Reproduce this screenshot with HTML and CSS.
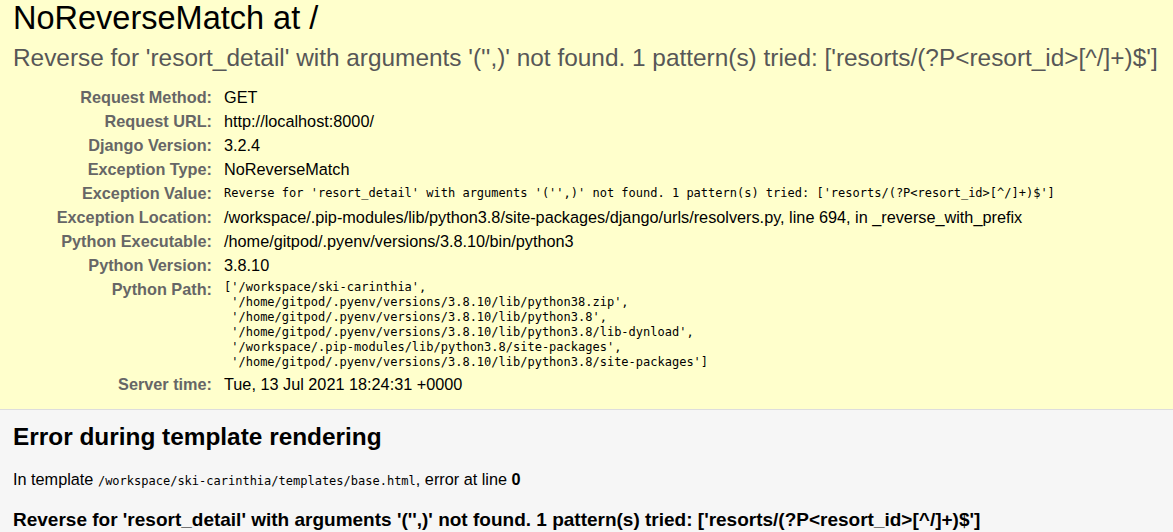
FILE: index.html
```html
<!DOCTYPE html>
<html lang="en">
<head>
<meta charset="utf-8">
<title>NoReverseMatch at /</title>
<link rel="stylesheet" href="styles.css">
</head>
<body>
<div class="summary">
  <h1 class="title">NoReverseMatch at /</h1>
  <pre class="exception-value">Reverse for 'resort_detail' with arguments '('',)' not found. 1 pattern(s) tried: ['resorts/(?P&lt;resort_id&gt;[^/]+)$']</pre>
  <table class="meta">
    <tbody>
      <tr><th>Request Method:</th><td>GET</td></tr>
      <tr><th>Request URL:</th><td>http://localhost:8000/</td></tr>
      <tr><th>Django Version:</th><td>3.2.4</td></tr>
      <tr><th>Exception Type:</th><td>NoReverseMatch</td></tr>
      <tr><th>Exception Value:</th><td><pre class="mono mono-value">Reverse for 'resort_detail' with arguments '('',)' not found. 1 pattern(s) tried: ['resorts/(?P&lt;resort_id&gt;[^/]+)$']</pre></td></tr>
      <tr><th>Exception Location:</th><td>/workspace/.pip-modules/lib/python3.8/site-packages/django/urls/resolvers.py, line 694, in _reverse_with_prefix</td></tr>
      <tr><th>Python Executable:</th><td>/home/gitpod/.pyenv/versions/3.8.10/bin/python3</td></tr>
      <tr><th>Python Version:</th><td>3.8.10</td></tr>
      <tr><th>Python Path:</th><td><pre class="mono">['/workspace/ski-carinthia',
 '/home/gitpod/.pyenv/versions/3.8.10/lib/python38.zip',
 '/home/gitpod/.pyenv/versions/3.8.10/lib/python3.8',
 '/home/gitpod/.pyenv/versions/3.8.10/lib/python3.8/lib-dynload',
 '/workspace/.pip-modules/lib/python3.8/site-packages',
 '/home/gitpod/.pyenv/versions/3.8.10/lib/python3.8/site-packages']</pre></td></tr>
      <tr><th>Server time:</th><td>Tue, 13 Jul 2021 18:24:31 +0000</td></tr>
    </tbody>
  </table>
</div>
<div class="template">
  <h2 class="section-title">Error during template rendering</h2>
  <p class="template-info">In template <code class="code">/workspace/ski-carinthia/templates/base.html</code>, error at line <strong>0</strong></p>
  <h3 class="template-message">Reverse for 'resort_detail' with arguments '('',)' not found. 1 pattern(s) tried: ['resorts/(?P&lt;resort_id&gt;[^/]+)$']</h3>
</div>
</body>
</html>
```
FILE: styles.css
```css
html, body {
  margin: 0;
  padding: 0;
}
body {
  font-family: "Liberation Sans", Arial, sans-serif;
  font-size: 16.25px;
  color: #000;
  background: #fff;
  overflow: hidden;
}
.summary {
  background: #ffc;
  padding: 0 13px 12px;
  border-bottom: 1px solid #ddd;
}
.title {
  margin: 0;
  font-size: 32.5px;
  font-weight: normal;
  line-height: 37px;
}
.exception-value {
  margin: 7px 0 13.5px;
  font-family: "Liberation Sans", Arial, sans-serif;
  font-size: 24.4px;
  line-height: 28px;
  color: #575757;
  white-space: pre-wrap;
}
.meta {
  border-collapse: collapse;
  border: none;
  width: 100%;
}
.meta th {
  width: 195px;
  text-align: right;
  vertical-align: top;
  color: #666;
  font-weight: bold;
  padding: 2.5px 8px 2.5px 4px;
  line-height: 19px;
  white-space: nowrap;
}
.meta td {
  vertical-align: top;
  padding: 2.5px 4px;
  line-height: 19px;
}
.mono {
  margin: 0;
  font-family: "DejaVu Sans Mono", monospace;
  font-size: 12px;
  line-height: 15px;
  white-space: pre-wrap;
}
.mono-value {
  padding-top: 2px;
}
.template {
  background: #f6f6f6;
  padding: 13px 13px 20px;
}
.section-title {
  margin: 0 0 19px;
  font-size: 24.4px;
  line-height: 28px;
}
.template-info {
  margin: 0 0 18px;
  line-height: 19px;
}
.code {
  font-family: "DejaVu Sans Mono", monospace;
  font-size: 12px;
}
.template-message {
  margin: 0;
  font-size: 19px;
  line-height: 22px;
}
```
